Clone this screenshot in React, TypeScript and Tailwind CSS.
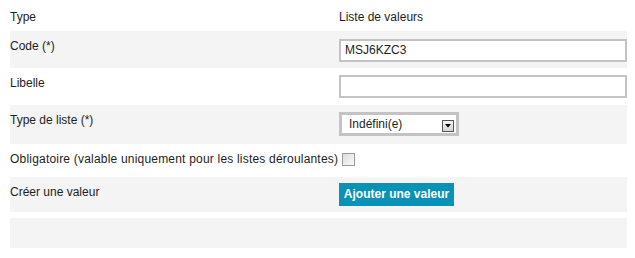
import React from "react";

const font = { fontFamily: '"Liberation Sans", Arial, sans-serif' };

function Row({ gray, h, pt, label, children }: { gray?: boolean; h: string; pt: string; label: React.ReactNode; children?: React.ReactNode }) {
  return (
    <div className={`flex ${h} ${gray ? "bg-[#f4f4f4]" : "bg-white"}`}>
      <div className={`w-[329px] shrink-0 ${pt} whitespace-nowrap`}>{label}</div>
      <div className="flex-1 min-w-0">{children}</div>
    </div>
  );
}

export default function App() {
  return (
    <div className="w-[635px] h-[258px] bg-white pl-[10px] pr-[8px] text-[12px] leading-[15px] text-[#1e1e1e]" style={font}>
      <Row h="h-[31px]" pt="pt-[10px]" label="Type">
        <div className="pt-[10px]">Liste de valeurs</div>
      </Row>
      <Row gray h="h-[37px]" pt="pt-[8px]" label="Code (*)">
        <div className="pt-[8px]">
          <div className="h-[23px] border-2 border-[#c3c3c3] bg-white flex items-center pl-[4px]">MSJ6KZC3</div>
        </div>
      </Row>
      <Row h="h-[37px]" pt="pt-[8px]" label="Libelle">
        <div className="pt-[7px]">
          <div className="h-[23px] border-2 border-[#c3c3c3] bg-white" />
        </div>
      </Row>
      <Row gray h="h-[39px]" pt="pt-[8px]" label="Type de liste (*)">
        <div className="pt-[7px]">
          <div className="w-[120px] h-[24px] border-[3px] border-[#c3c3c3] bg-white flex items-center pl-[7px] pr-[2px]">
            <span className="flex-1">Indéfini(e)</span>
            <span className="self-start mt-[5px] w-[12px] h-[12px] border border-[#555] bg-gradient-to-b from-[#f4f4f4] to-[#d4d4d4] flex items-center justify-center">
              <svg width="6" height="4" viewBox="0 0 6 4"><path d="M0 0h6L3 3.5z" fill="#000" /></svg>
            </span>
          </div>
        </div>
      </Row>
      <div className="flex h-[33px] bg-white pt-[8px]">
        <span className="whitespace-nowrap tracking-[0.2px]">Obligatoire (valable uniquement pour les listes déroulantes)</span>
        <span className="ml-[4px] mt-[1px] w-[13px] h-[13px] border border-[#9a9a9a] bg-gradient-to-br from-[#dcdcdc] to-[#fbfbfb]" />
      </div>
      <Row gray h="h-[35px]" pt="pt-[8px]" label="Créer une valeur">
        <div className="pt-[6px]">
          <div className="inline-flex w-[115px] h-[23px] items-center justify-center bg-[#0a92b6] text-white font-bold">Ajouter une valeur</div>
        </div>
      </Row>
      <div className="h-[6px]" />
      <div className="h-[30px] bg-[#f4f4f4]" />
    </div>
  );
}
